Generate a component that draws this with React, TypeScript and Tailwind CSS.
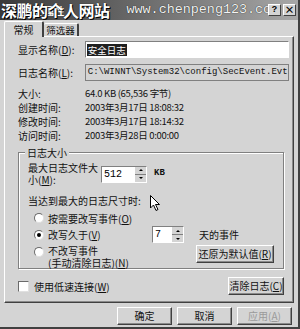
import React from "react";

const cjk = { fontFamily: '"Noto Sans CJK SC", "Noto Sans", sans-serif' };
const mono = { fontFamily: '"Liberation Mono", "DejaVu Sans Mono", monospace' };

function Btn({ children, w, disabled }: { children: React.ReactNode; w: string; disabled?: boolean }) {
  return (
    <div
      className={`${w} h-[18px] flex items-center justify-center whitespace-nowrap text-[10px] leading-none border border-t-white border-l-white border-r-[#404040] border-b-[#404040] shadow-[inset_-1px_-1px_0_#8a8a8a] bg-[#d4d4d4] ${disabled ? "text-[#9a9a9a]" : "text-[#111]"}`}
      style={cjk}
    >
      {children}
    </div>
  );
}

function Spin({ w, value }: { w: string; value: string }) {
  return (
    <div className={`${w} h-[17px] flex border border-t-[#808080] border-l-[#808080] border-r-white border-b-white bg-white`}>
      <div className="flex-1 text-[10px] leading-[15px] pl-[2px] text-black" style={mono}>{value}</div>
      <div className="w-[11px] flex flex-col">
        <div className="flex-1 bg-[#d4d4d4] border-b border-[#808080] flex items-center justify-center">
          <div className="w-0 h-0 border-l-[2px] border-r-[2px] border-b-[2px] border-l-transparent border-r-transparent border-b-black" />
        </div>
        <div className="flex-1 bg-[#d4d4d4] flex items-center justify-center">
          <div className="w-0 h-0 border-l-[2px] border-r-[2px] border-t-[2px] border-l-transparent border-r-transparent border-t-black" />
        </div>
      </div>
    </div>
  );
}

function Radio({ checked }: { checked?: boolean }) {
  return (
    <div className="w-[10px] h-[10px] shrink-0 rounded-full bg-white border border-t-[#6a6a6a] border-l-[#6a6a6a] border-r-[#e0e0e0] border-b-[#e0e0e0] flex items-center justify-center">
      {checked && <div className="w-[4px] h-[4px] rounded-full bg-black" />}
    </div>
  );
}

export default function App() {
  return (
    <div className="w-[300px] h-[329px] bg-[#d4d4d4] relative overflow-hidden border-r-2 border-b-2 border-[#404040] text-[#111] text-[10px]" style={cjk}>
      {/* Title bar */}
      <div className="h-[20px] bg-gradient-to-r from-[#3a3a3a] via-[#6e6e6e] to-[#a8a8a8] flex items-center pl-[22px] pr-[2px] relative">
        <span className="text-[10px] text-white font-bold">安全 属性</span>
        <div className="ml-auto flex gap-[2px] relative z-10">
          <div className="w-[13px] h-[12px] bg-[#d4d4d4] border border-t-white border-l-white border-r-[#404040] border-b-[#404040] flex items-center justify-center text-[9px] font-bold leading-none text-black" style={mono}>?</div>
          <div className="w-[13px] h-[12px] bg-[#d4d4d4] border border-t-white border-l-white border-r-[#404040] border-b-[#404040] flex items-center justify-center text-[10px] font-bold leading-none text-black">×</div>
        </div>
        {/* watermark */}
        <div className="absolute left-[1px] top-0 h-[20px] flex items-center whitespace-nowrap pointer-events-none">
          <span className="text-[16px] leading-[20px] tracking-[-0.5px] font-bold text-white [text-shadow:0_0_1px_#000,1px_1px_0_#000]">深鹏的个人网站</span>
          <span className="ml-[17px] text-[13.4px] leading-[20px] text-[#f4f4f4] [text-shadow:0_0_1px_#000]" style={mono}>www.chenpeng123.com</span>
        </div>
      </div>

      {/* Tabs */}
      <div className="flex items-end pl-[4px] h-[16px]">
        <div className="w-[40px] h-[16px] bg-[#d4d4d4] border-t border-l border-white border-r-2 border-r-[#404040] rounded-t-[2px] flex items-center justify-center text-[10px] relative z-10 -mb-[1px]">常规</div>
        <div className="w-[35px] h-[13px] border-t border-white border-r-2 border-r-[#404040] rounded-t-[2px] flex items-center justify-center text-[9.5px]">筛选器</div>
      </div>

      {/* Panel */}
      <div className="mx-[4px] h-[267px] border border-t-white border-l-white border-r-[#404040] border-b-[#404040] shadow-[inset_-1px_-1px_0_#8a8a8a] pl-[13px] pr-[4px] pt-[4px]">
        <div className="flex items-center h-[17px]">
          <div className="w-[67px] whitespace-nowrap">显示名称(<u>D</u>):</div>
          <div className="w-[205px] h-[17px] bg-white border border-t-[#808080] border-l-[#808080] border-r-white border-b-white flex items-center pl-[1px]">
            <span className="bg-[#202020] text-white text-[9.5px] leading-[12px] px-[1px]">安全日志</span>
          </div>
        </div>
        <div className="flex items-center h-[17px] mt-[6px]">
          <div className="w-[67px] whitespace-nowrap">日志名称(<u>L</u>):</div>
          <div className="w-[205px] h-[17px] bg-[#d4d4d4] border border-[#808080] flex items-center pl-[2px] text-[9px] whitespace-nowrap overflow-hidden" style={mono}>C:\WINNT\System32\config\SecEvent.Evt</div>
        </div>
        <div className="mt-[5px] flex flex-col">
          {[
            ["大小:", "64.0 KB (65,536 字节)"],
            ["创建时间:", "2003年3月17日 18:08:32"],
            ["修改时间:", "2003年3月17日 18:14:32"],
            ["访问时间:", "2003年3月28日 0:00:00"],
          ].map(([a, b]) => (
            <div key={a} className="flex h-[14px] items-center whitespace-nowrap">
              <div className="w-[67px]">{a}</div>
              <div className="text-[9.5px] tracking-[-0.3px]">{b}</div>
            </div>
          ))}
        </div>

        {/* Group box */}
        <div className="relative mt-[10px] w-[266px] h-[117px] border border-[#808080] shadow-[1px_1px_0_white,inset_1px_1px_0_white] pl-[9px] pt-[9px]">
          <div className="absolute -top-[8px] left-[6px] bg-[#d4d4d4] px-[2px] text-[10px]">日志大小</div>
          <div className="flex items-center">
            <div className="w-[73px] leading-[12px] whitespace-nowrap">最大日志文件大<br />小(<u>M</u>):</div>
            <Spin w="w-[46px]" value="512" />
            <div className="ml-[7px] text-[9px] font-bold" style={mono}>KB</div>
          </div>
          <div className="mt-[8px] h-[14px] leading-[14px] whitespace-nowrap">当达到最大的日志尺寸时:</div>
          <div className="pl-[6px] mt-[2px] flex flex-col">
            <div className="flex items-center h-[16px] gap-[4px] whitespace-nowrap">
              <Radio />
              <span>按需要改写事件(<u>O</u>)</span>
            </div>
            <div className="flex items-center h-[17px] gap-[4px] whitespace-nowrap">
              <Radio checked />
              <span className="w-[100px]">改写久于(<u>V</u>)</span>
              <Spin w="w-[32px]" value="7" />
              <span className="ml-[11px]">天的事件</span>
            </div>
            <div className="flex items-start mt-[2px]">
              <div className="mt-[2px]"><Radio /></div>
              <div className="ml-[4px] leading-[12px] whitespace-nowrap">
                不改写事件<br />(手动清除日志)(<u>N</u>)
              </div>
              <div className="ml-auto mr-[9px]"><Btn w="w-[78px]">还原为默认值(<u>R</u>)</Btn></div>
            </div>
          </div>
        </div>

        <div className="flex items-center mt-[8px] w-[266px]">
          <div className="w-[11px] h-[11px] bg-white border border-t-[#6a6a6a] border-l-[#6a6a6a] border-r-[#e0e0e0] border-b-[#e0e0e0]" />
          <span className="ml-[5px] whitespace-nowrap">使用低速连接(<u>W</u>)</span>
          <div className="ml-auto"><Btn w="w-[56px]">清除日志(<u>C</u>)</Btn></div>
        </div>
      </div>

      {/* bottom buttons */}
      <div className="flex justify-end gap-[5px] pr-[6px] mt-[4px]">
        <Btn w="w-[55px]">确定</Btn>
        <Btn w="w-[55px]">取消</Btn>
        <Btn w="w-[55px]" disabled>应用(<u>A</u>)</Btn>
      </div>

      {/* mouse cursor */}
      <svg className="absolute left-[150px] top-[195px]" width="11" height="17" viewBox="0 0 11 17">
        <path d="M0.5 0.5 L0.5 13 L3.5 10 L6 15.5 L8 14.5 L5.5 9.5 L9.5 9.5 Z" fill="white" stroke="black" strokeWidth="1" />
      </svg>
    </div>
  );
}
